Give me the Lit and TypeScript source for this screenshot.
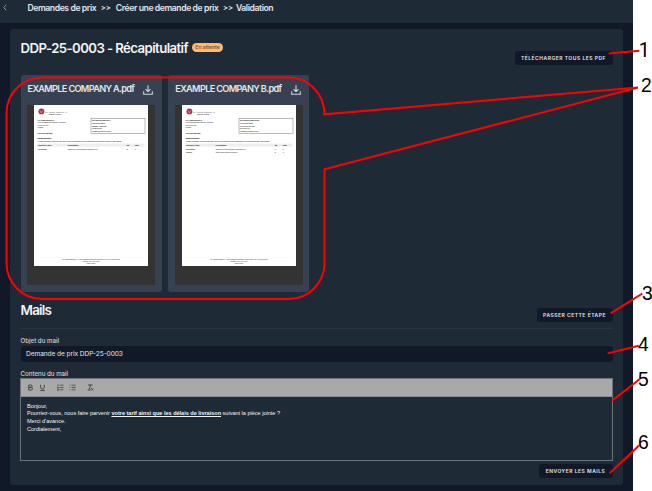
import { LitElement, html, css, svg } from "lit";
import { customElement, property } from "lit/decorators.js";

interface Line {
  ref: string;
  label: string;
  width: number;
  qty: string;
}

@customElement("pdf-card")
class PdfCard extends LitElement {
  @property() name = "";
  @property({ attribute: false }) address: string[] = [];
  @property({ attribute: false }) lines: Line[] = [];

  static styles = css`
    :host {
      display: block;
      box-sizing: border-box;
      width: 141px;
      height: 217px;
      padding: 0 6.5px 7px 6.5px;
      border-radius: 3px;
      background: #374151;
    }
    .head {
      display: flex;
      align-items: center;
      justify-content: space-between;
      height: 29.5px;
      box-sizing: border-box;
      padding: 0 2px 3px 0.5px;
      color: #e5e7eb;
      font: 600 9.2px Inter, sans-serif;
      letter-spacing: -0.68px;
      white-space: nowrap;
    }
    .dl {
      width: 10px;
      height: 10px;
      flex: none;
      margin-top: 3px;
    }
    .viewer {
      height: 180.5px;
      background: #333;
      display: flex;
      justify-content: center;
    }
    .page {
      display: block;
      width: 114px;
      height: 161px;
      margin-top: 0.5px;
    }
  `;

  render() {
    return html`
      <div class="head">
        <span>${this.name}.pdf</span>
        <svg class="dl" viewBox="0 0 10 10" fill="none" stroke="#d1d5db" stroke-width="1.1">
          <path d="M5 0.3V6.5M2.5 4.2L5 6.7L7.5 4.2M0.7 6.3V9.2H9.3V6.3" />
        </svg>
      </div>
      <div class="viewer">
        <svg class="page" viewBox="0 0 114 161" font-family="Liberation Sans, sans-serif" font-size="2.5" fill="#444">
          <rect width="114" height="161" fill="#fff" />
          <circle cx="7.4" cy="6.4" r="2.9" fill="#b02a45" />
          <path d="M5.7 5.2L7.4 7.8L9 5.2M6.4 7.2H8.4" fill="none" stroke="#eab8c2" stroke-width="0.5" />
          <text x="11" y="7.5" textLength="22" font-size="2.4" fill="#666">PLASTIE CENTRAL</text>
          <text x="15" y="9.7" textLength="12" font-size="2.2" font-weight="bold">SERVICES</text>
          <g>
            <text x="3.5" y="16" textLength="17" font-weight="bold">PLASTIE CENTRAL</text>
            <text x="3.5" y="18.2" textLength="28">1 rue du Bois des Ormes - ZI Nord</text>
            <text x="3.5" y="20.6" textLength="11">69000 Lyon</text>
            <text x="3.5" y="22.9" textLength="6">France</text>
            <text x="3.5" y="28.8" textLength="15" font-weight="bold">Réf : DDP-25-0003</text>
            <text x="3.5" y="34.3" textLength="14" font-weight="bold">Bonjour Monsieur,</text>
            <text x="3.5" y="36.5" textLength="84">Veuillez nous faire parvenir votre offre de prix concernant les éléments indiqués ci-dessous avant le 30/06/2025</text>
          </g>
          <rect x="57" y="13.5" width="54" height="15" fill="#fff" stroke="#777" stroke-width="0.5" />
          <g>
            <text x="58" y="16.4" textLength="19" font-weight="bold">${this.name}</text>
            ${this.address.map(
              (a, i) => svg`<text x="58" y=${18.9 + i * 2.6} textLength=${[13, 15, 10, 19][i]}>${a}</text>`
            )}
          </g>
          <rect x="3.5" y="38.6" width="107" height="3" fill="#eeeeee" />
          <g font-weight="bold">
            <text x="3.7" y="40.9" textLength="14">Référence Article</text>
            <text x="33.5" y="40.9" textLength="11">Désignation</text>
            <text x="92.5" y="40.9" textLength="3">Qté</text>
            <text x="100.5" y="40.9" textLength="4.5">Unité</text>
          </g>
          ${this.lines.map(
            (l, i) => svg`
              <text x="3.7" y=${44.7 + i * 3.5} textLength=${i ? 6.5 : 9.5}>${l.ref}</text>
              <text x="33.5" y=${44.7 + i * 3.5} textLength=${l.width}>${l.label}</text>
              <text x="92.5" y=${44.7 + i * 3.5}>${l.qty}</text>
              <text x="100.8" y=${44.7 + i * 3.5}>u</text>`
          )}
          <path d="M3 152.5H111" stroke="#eee" stroke-width="0.3" />
          <text x="28" y="155.4" textLength="58" font-size="2.1">PLASTIE CENTRAL - 1 rue du Bois des Ormes, 69000 Lyon - Tél : 04 00 00 00 00</text>
          <text x="48.5" y="157.2" textLength="17" font-size="2.1">SIRET 000 000 000</text>
          <text x="52.5" y="159.2" textLength="9" font-size="2.1">Page 1 sur 1</text>
        </svg>
      </div>
    `;
  }
}

@customElement("app-root")
class AppRoot extends LitElement {
  static styles = css`
    :host {
      display: block;
      position: relative;
      width: 652px;
      height: 491px;
      overflow: hidden;
      background: #fff;
      font-family: Inter, sans-serif;
      color: #e5e7eb;
      white-space: nowrap;
    }
    .app {
      width: 633px;
      height: 491px;
      background: #111827;
      display: flex;
      flex-direction: column;
    }
    .top {
      display: flex;
      align-items: center;
      height: 23px;
      box-sizing: border-box;
      padding: 0 0 8px 3px;
      background: #1f2a37;
      font-size: 8.6px;
      font-weight: 600;
      letter-spacing: -0.4px;
    }
    .back {
      width: 4px;
      height: 7px;
      margin-right: 20.5px;
    }
    .sep {
      margin: 0 5px 0 4.6px;
      font-size: 7.5px;
      letter-spacing: -0.1px;
    }
    .sep.last {
      margin-right: 3px;
    }
    .card {
      box-sizing: border-box;
      width: 613px;
      height: 455.5px;
      margin: 6px 0 0 10px;
      padding: 0 10.5px;
      border-radius: 3px;
      background: #1f2a37;
    }
    .row {
      display: flex;
      justify-content: space-between;
    }
    .recap {
      height: 46.4px;
    }
    .titles {
      display: flex;
      align-items: center;
      height: 37px;
    }
    h1,
    h2 {
      margin: 0;
      font-weight: 600;
      color: #f3f4f6;
    }
    .title {
      font-size: 13.2px;
      letter-spacing: -0.58px;
    }
    .badge {
      width: 31px;
      height: 8.5px;
      margin-left: 4px;
      border-radius: 5px;
      background: #fdba74;
      color: #7c4a1e;
      font-size: 5.2px;
      font-weight: 500;
      line-height: 8.5px;
      letter-spacing: -0.05px;
      text-align: center;
    }
    .btn {
      box-sizing: border-box;
      height: 14px;
      border-radius: 3px;
      background: #111827;
      color: #e5e7eb;
      font-size: 5px;
      font-weight: 600;
      letter-spacing: 0.5px;
      line-height: 14px;
      text-align: center;
    }
    .all {
      width: 98px;
      margin-top: 22px;
    }
    .skip {
      width: 76px;
      margin-top: 16px;
    }
    .send {
      width: 74px;
      margin: 3px 0 0 auto;
    }
    .pdfs {
      display: flex;
      gap: 6.8px;
    }
    .mails {
      height: 36.3px;
      box-sizing: border-box;
      border-bottom: 1px solid #2b3643;
    }
    h2 {
      line-height: 37px;
      height: 35px;
      font-size: 13.5px;
      letter-spacing: -0.8px;
    }
    label {
      display: block;
      font-size: 6.2px;
      font-weight: 500;
      color: #d1d5db;
      letter-spacing: -0.03px;
    }
    .l1 {
      height: 17.3px;
      line-height: 23.4px;
    }
    .l2 {
      height: 15.5px;
      line-height: 24px;
    }
    .input {
      height: 16.5px;
      border-radius: 3px;
      background: #111827;
      padding-left: 5.5px;
      font-size: 6.6px;
      line-height: 17.7px;
      letter-spacing: -0.08px;
    }
    .editor {
      box-sizing: border-box;
      height: 83px;
      border: 1px solid #6f757c;
      margin-left: -0.5px;
      background: #1f2a37;
    }
    .tools {
      display: flex;
      align-items: center;
      height: 18px;
      background: #a9a9a9;
      border-bottom: 1px solid #8c9094;
      padding-left: 5.6px;
      box-sizing: border-box;
    }
    .tools svg {
      width: 7px;
      height: 7px;
      margin-right: 5.2px;
      fill: none;
      stroke: #444;
      stroke-width: 1;
    }
    .tools .gap {
      margin-right: 11.2px;
    }
    .body {
      padding: 5.6px 6px;
      font: 5.55px/7.8px "Liberation Sans", sans-serif;
      letter-spacing: -0.01px;
      color: #f3f4f6;
    }
    .marks {
      position: absolute;
      inset: 0;
      width: 652px;
      height: 491px;
    }
  `;

  private marks: [string, number, number][] = [
    ["2", 641, 92],
    ["3", 642, 300],
    ["4", 638, 351],
    ["5", 638, 385.5],
    ["6", 638, 449],
  ];

  render() {
    return html`
      <div class="app">
        <div class="top">
          <svg class="back" viewBox="0 0 4 7" fill="none" stroke="#9ca3af" stroke-width="0.9"><path d="M3.2 0.8L0.8 3.5L3.2 6.2" /></svg>
          <span>Demandes de prix</span><span class="sep">&gt;&gt;</span>
          <span>Créer une demande de prix</span><span class="sep last">&gt;&gt;</span>
          <span>Validation</span>
        </div>
        <div class="card">
          <div class="row recap">
            <div class="titles">
              <h1 class="title">DDP-25-0003 - Récapitulatif</h1>
              <span class="badge">En attente</span>
            </div>
            <div class="btn all">TÉLÉCHARGER TOUS LES PDF</div>
          </div>
          <div class="pdfs">
            <pdf-card
              name="EXAMPLE COMPANY A"
              .address=${["12 Example Street", "75000 EXAMPLE CITY", "0102030405", "contact@example-a.com"]}
              .lines=${[{ ref: "00000001234", label: "Tube inox rond brossé longueur 6m", width: 30, qty: "1" }]}
            ></pdf-card>
            <pdf-card
              name="EXAMPLE COMPANY B"
              .address=${["34 Sample Street", "69000 Sample City", "Example B", "contact@example-b.com"]}
              .lines=${[
                { ref: "00000005678", label: "Tube inox rond brossé longueur 6m", width: 30, qty: "1" },
                { ref: "0012345", label: "Tube acier soudé en 2mm", width: 22, qty: "5" },
              ]}
            ></pdf-card>
          </div>
          <div class="row mails">
            <h2>Mails</h2>
            <div class="btn skip">PASSER CETTE ÉTAPE</div>
          </div>
          <label class="l1">Objet du mail</label>
          <div class="input">Demande de prix DDP-25-0003</div>
          <label class="l2">Contenu du mail</label>
          <div class="editor">
            <div class="tools">
              <svg viewBox="0 0 7 7"><path d="M1.7 1H3.8Q5.2 1 5.2 2.2T3.8 3.4H1.7ZM1.7 3.4H4Q5.5 3.4 5.5 4.7T4 6H1.7Z" /></svg>
              <svg class="gap" viewBox="0 0 7 7"><path d="M1.7 0.7V3.3Q1.7 5 3.5 5T5.3 3.3V0.7M1.2 6.4H5.8" /></svg>
              <svg viewBox="0 0 7 7"><path d="M2.5 1.2H6.6M2.5 3.5H6.6M2.5 5.8H6.6M0.9 0.4V2M0.3 2.9H1.4L0.4 4.2H1.5M0.3 5.1H1.4V6.6H0.3" stroke-width="0.75" /></svg>
              <svg class="gap" viewBox="0 0 7 7"><path d="M2.5 1.2H6.6M2.5 3.5H6.6M2.5 5.8H6.6M0.5 1.2H1.3M0.5 3.5H1.3M0.5 5.8H1.3" stroke-width="0.8" /></svg>
              <svg viewBox="0 0 7 7"><path d="M1 1H5.6M3.5 1L2.3 5.7M0.6 6H3.4M4.3 4.3L6.3 6.3M6.3 4.3L4.3 6.3" /></svg>
            </div>
            <div class="body">
              Bonjour,<br />Pourriez-vous, nous faire parvenir
              <b><u>votre tarif ainsi que les délais de livraison</u></b> suivant la pièce jointe ?<br />Merci d'avance.<br />Cordialement,
            </div>
          </div>
          <div class="btn send">ENVOYER LES MAILS</div>
        </div>
      </div>
      <svg class="marks" viewBox="0 0 652 491">
        <path
          fill="none"
          stroke="#f00"
          stroke-width="2"
          d="M638 87.5L324.5 114.3A36 37 0 0 0 290 77.5H42A35.5 36 0 0 0 6.5 113.5V263A35.5 36 0 0 0 42 299H289A35.5 36 0 0 0 324.5 263V169.3L638 87.5M608.7 53.4L639.3 50.7M610.7 313.3L642.3 293.5M607.7 353.4L638.7 345.7M612 400.7L639.5 379.2M609.7 473.3L639.3 445.3"
        />
        <g font-family="Liberation Sans, Arial, sans-serif" font-size="19.3" fill="#000">
          <text x="638.8" y="57" font-family="Roboto, sans-serif" font-size="19.5">1</text>
          ${this.marks.map(([n, x, y]) => svg`<text x=${x} y=${y}>${n}</text>`)}
        </g>
      </svg>
    `;
  }
}
